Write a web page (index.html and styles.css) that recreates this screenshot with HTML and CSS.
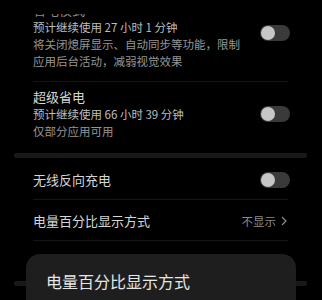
FILE: index.html
```html
<!DOCTYPE html>
<html lang="zh">
<head>
<meta charset="utf-8">
<link rel="stylesheet" href="styles.css">
</head>
<body>
<div class="screen">
  <div class="list">
    <div class="row row-a">
      <div class="texts">
        <div class="title title-dim">省电模式</div>
        <div class="sub">预计继续使用 27 小时 1 分钟</div>
        <p class="desc">将关闭熄屏显示、自动同步等功能，限制<br>应用后台活动，减弱视觉效果</p>
      </div>
      <div class="toggle toggle-up"><span class="knob"></span></div>
    </div>
    <div class="sep"></div>
    <div class="row row-b">
      <div class="texts">
        <div class="title">超级省电</div>
        <div class="sub">预计继续使用 66 小时 39 分钟</div>
        <p class="desc">仅部分应用可用</p>
      </div>
      <div class="toggle"><span class="knob"></span></div>
    </div>
    <div class="band"></div>
    <div class="row row-c">
      <div class="texts"><div class="title">无线反向充电</div></div>
      <div class="toggle"><span class="knob"></span></div>
    </div>
    <div class="sep"></div>
    <div class="row row-d">
      <div class="texts"><div class="title">电量百分比显示方式</div></div>
      <div class="value">不显示<svg class="chev" width="6" height="10" viewBox="0 0 6 10"><path d="M1 1 L5 5 L1 9" fill="none" stroke="#8a8a8a" stroke-width="1.2"/></svg></div>
    </div>
    <div class="sep"></div>
    <div class="row row-d">
      <div class="texts"><div class="title">电池详情</div></div>
    </div>
    <div class="band"></div>
  </div>
  <div class="fade"></div>
  <div class="dialog">
    <div class="dialog-title">电量百分比显示方式</div>
  </div>
</div>
</body>
</html>
```
FILE: styles.css
```css
html, body {
  margin: 0;
  padding: 0;
  background: #000;
}
body {
  font-family: "Noto Sans CJK SC", sans-serif;
  width: 322px;
  height: 300px;
  overflow: hidden;
}
.screen {
  position: relative;
  width: 322px;
  height: 300px;
  overflow: hidden;
  background: #000;
}
.list {
  display: flex;
  flex-direction: column;
}
.row {
  display: flex;
  align-items: center;
  justify-content: space-between;
  padding-left: 33px;
  padding-right: 32px;
}
.row-a { padding-top: 1px; padding-bottom: 11px; }
.row-b { padding-top: 6px; padding-bottom: 13px; }
.row-c { padding-top: 13px; padding-bottom: 10px; }
.row-d { padding-top: 12px; padding-bottom: 10px; }
.texts {
  display: block;
}
.title {
  font-size: 13px;
  line-height: 18px;
  color: #d6d6d6;
  white-space: nowrap;
}
.title-dim { color: #8a8a8a; }
.sub {
  font-size: 11.5px;
  line-height: 17px;
  color: #bdbdbd;
  white-space: nowrap;
}
.desc {
  margin: 0;
  font-size: 11.5px;
  line-height: 17px;
  color: #969696;
  white-space: nowrap;
  letter-spacing: 0;
  text-spacing-trim: space-all;
  text-autospace: no-autospace;
}
.toggle {
  width: 30px;
  height: 16px;
  border-radius: 8px;
  background: #3a3a3a;
  display: flex;
  align-items: center;
  padding-left: 1px;
  box-sizing: border-box;
  flex-shrink: 0;
}
.toggle-up { margin-bottom: 5px; }
.knob {
  width: 14px;
  height: 14px;
  border-radius: 50%;
  background: #c6c6c6;
}
.sep {
  height: 1px;
  background: #161616;
  margin: 0 34px 0 33px;
}
.band {
  height: 5px;
  background: #181818;
  margin: 0 15px 0 14px;
  border-radius: 2px;
}
.value {
  display: flex;
  align-items: center;
  gap: 5px;
  margin-right: 3px;
  font-size: 11.5px;
  line-height: 18px;
  color: #8a8a8a;
}
.chev { display: block; }
.fade {
  position: absolute;
  left: 0;
  top: 0;
  width: 322px;
  height: 14px;
  background: #000;
}
.dialog {
  position: absolute;
  left: 26px;
  top: 254px;
  width: 270px;
  height: 80px;
  background: #1e1e1e;
  border-radius: 14px;
  padding: 16px 20px 0;
  box-sizing: border-box;
}
.dialog-title {
  font-size: 16px;
  line-height: 22px;
  color: #e6e6e6;
}
```
